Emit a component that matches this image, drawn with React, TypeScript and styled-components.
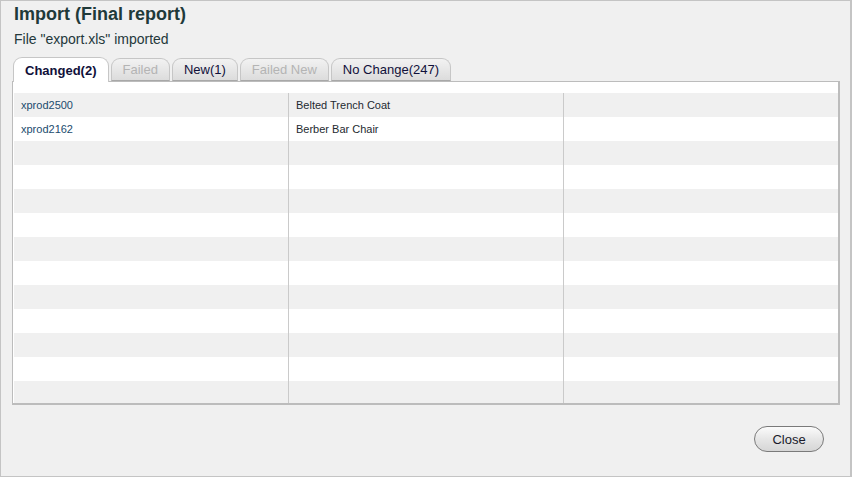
import React, { FC, useState } from 'react'
import styled, { createGlobalStyle } from 'styled-components'

//CSS
const GlobalStyle = createGlobalStyle`
    html, body {
        margin: 0;
        padding: 0;
        background: #f0f0f0;
    }
    body {
        font-family: Arial, "Liberation Sans", sans-serif;
    }
`
const StyledDialog = styled.div`
    box-sizing: border-box;
    width: 852px;
    height: 477px;
    display: flex;
    flex-direction: column;
    background: #f0f0f0;
    border: 1px solid #c4c4c4;
    border-right-width: 2px;
    padding: 2px 12px 0 11px;
`
const StyledH1 = styled.h1`
    margin: 0 0 0 2px;
    font-size: 18px;
    line-height: 22px;
    font-weight: bold;
    color: #1f3a3a;
`
const StyledP = styled.p`
    margin: 5px 0 0 2px;
    font-size: 14px;
    line-height: 18px;
    color: #24383b;
`
const StyledTabs = styled.div`
    display: flex;
    align-items: flex-end;
    gap: 2px;
    margin: 9px 0 0 1px;
    height: 24px;
    position: relative;
    z-index: 1;
`
const StyledTab = styled.button<{ $active?: boolean; $disabled?: boolean }>`
    box-sizing: border-box;
    height: ${p => (p.$active ? '25px' : '23px')};
    padding: 0 11px;
    padding-top: ${p => (p.$active ? '1px' : '0')};
    margin-bottom: ${p => (p.$active ? '-1px' : '0')};
    border: 1px solid #c6c6c6;
    border-bottom: ${p => (p.$active ? 'none' : '1px solid #a8a8a8')};
    border-radius: 9px 9px 0 0;
    background: ${p => (p.$active ? '#fff' : 'linear-gradient(#f2f2f2, #dcdcdc)')};
    font-family: Arial, "Liberation Sans", sans-serif;
    font-size: 13px;
    font-weight: ${p => (p.$active ? 'bold' : 'normal')};
    color: ${p => (p.$disabled ? '#b4b4b4' : '#10103a')};
    cursor: ${p => (p.$disabled ? 'default' : 'pointer')};
`
const StyledPanel = styled.div`
    box-sizing: border-box;
    width: 828px;
    height: 324px;
    background: #fff;
    border: 1px solid #bcbcbc;
    border-right-width: 2px;
    border-bottom-width: 2px;
    padding: 11px 0 0 1px;
    overflow: hidden;
`
const StyledGrid = styled.div`
    display: flex;
    flex-direction: column;
`
const StyledRow = styled.div<{ $odd: boolean }>`
    display: grid;
    grid-template-columns: 274px 275px 275px;
    height: 24px;
    background: ${p => (p.$odd ? '#f0f0f0' : '#fff')};
`
const StyledCell = styled.div<{ $first?: boolean; $link?: boolean }>`
    box-sizing: border-box;
    padding: 0 7px;
    font-size: 11px;
    line-height: 24px;
    color: ${p => (p.$link ? '#1b4b6e' : '#1e2a30')};
    border-left: ${p => (p.$first ? 'none' : '1px solid #cacaca')};
    white-space: nowrap;
    overflow: hidden;
`
const StyledFooter = styled.div`
    display: flex;
    justify-content: flex-end;
    padding: 21px 14px 0 0;
`
const StyledButton = styled.button`
    box-sizing: border-box;
    width: 70px;
    height: 26px;
    border: 1px solid #7a7a7a;
    border-radius: 13px;
    background: linear-gradient(#fbfbfb, #e6e6e6 50%, #d6d6d6);
    font-family: Arial, "Liberation Sans", sans-serif;
    font-size: 13px;
    color: #1a1a2a;
    cursor: pointer;
`

//TypeScript
type IRow = {
    id: string
    name: string
}

const tabs = [
    { label: 'Changed(2)', disabled: false },
    { label: 'Failed', disabled: true },
    { label: 'New(1)', disabled: false },
    { label: 'Failed New', disabled: true },
    { label: 'No Change(247)', disabled: false },
]

const rows: IRow[] = [
    { id: 'xprod2500', name: 'Belted Trench Coat' },
    { id: 'xprod2162', name: 'Berber Bar Chair' },
]

const App: FC = () => {
    const [active, setActive] = useState(0)
    // pad the grid with empty rows like the original
    const filled = Array.from({ length: 13 }, (_, i) => rows[i] || null)

    return (
        <React.Fragment>
            <GlobalStyle />
            <StyledDialog>
                <StyledH1>Import (Final report)</StyledH1>
                <StyledP>File "export.xls" imported</StyledP>
                <StyledTabs>
                    {tabs.map((t, i) => (
                        <StyledTab
                            key={t.label}
                            $active={i === active}
                            $disabled={t.disabled}
                            onClick={() => !t.disabled && setActive(i)}
                        >
                            {t.label}
                        </StyledTab>
                    ))}
                </StyledTabs>
                <StyledPanel>
                    <StyledGrid>
                        {filled.map((r, i) => (
                            <StyledRow key={i} $odd={i % 2 === 0}>
                                <StyledCell $first $link>{r ? r.id : ''}</StyledCell>
                                <StyledCell>{r ? r.name : ''}</StyledCell>
                                <StyledCell />
                            </StyledRow>
                        ))}
                    </StyledGrid>
                </StyledPanel>
                <StyledFooter>
                    <StyledButton>Close</StyledButton>
                </StyledFooter>
            </StyledDialog>
        </React.Fragment>
    )
}
export default App
